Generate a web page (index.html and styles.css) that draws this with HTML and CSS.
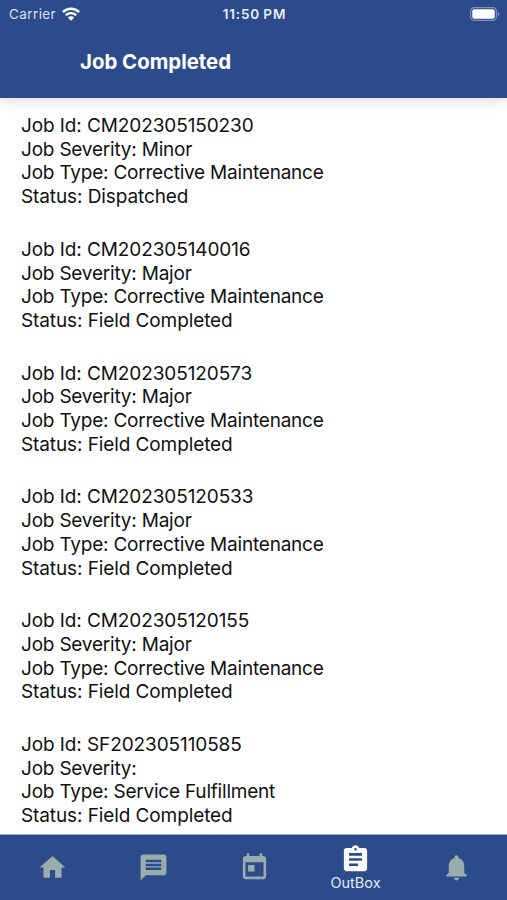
FILE: index.html
```html
<!DOCTYPE html>
<html lang="en">
<head>
    <meta charset="UTF-8">
    <meta name="viewport" content="width=device-width, initial-scale=1.0">
    <title>Job Completed</title>
    <link rel="stylesheet" href="styles.css">
</head>
<body>
    <header class="header">
        <div class="status-bar">
            <div class="carrier">
                <span class="carrier-name">Carrier</span>
                <svg class="wifi" viewBox="0 0 18 14" fill="none" stroke="#fff" stroke-width="2.3">
                    <path d="M.9 5.1a11.5 11.5 0 0 1 16.2 0"/>
                    <path d="M3.8 8.2a7.4 7.4 0 0 1 10.4 0"/>
                    <path d="M9 13.7 5.9 10.6a4.4 4.4 0 0 1 6.2 0z" fill="#fff" stroke="none"/>
                </svg>
            </div>
            <span class="time">11:50 PM</span>
            <div class="power">
                <svg class="battery" viewBox="0 0 30 14">
                    <rect x=".6" y=".6" width="25.8" height="12.8" rx="3.6" fill="none" stroke="#7f93ba" stroke-width="1.2"/>
                    <rect x="2.3" y="2.3" width="22.4" height="9.4" rx="2" fill="#fff"/>
                    <path d="M27.8 4.8c2.2.8 2.2 3.6 0 4.4z" fill="#7f93ba"/>
                </svg>
            </div>
        </div>
        <h1 class="title">Job Completed</h1>
    </header>

    <main class="job-list">
        <div class="job">
            <p class="job-id">Job Id: CM202305150230</p>
            <p>Job Severity: Minor</p>
            <p>Job Type: Corrective Maintenance</p>
            <p class="job-status">Status: Dispatched</p>
        </div>
        <div class="job">
            <p class="job-id">Job Id: CM202305140016</p>
            <p>Job Severity: Major</p>
            <p>Job Type: Corrective Maintenance</p>
            <p class="job-status">Status: Field Completed</p>
        </div>
        <div class="job">
            <p class="job-id">Job Id: CM202305120573</p>
            <p>Job Severity: Major</p>
            <p>Job Type: Corrective Maintenance</p>
            <p class="job-status">Status: Field Completed</p>
        </div>
        <div class="job">
            <p class="job-id">Job Id: CM202305120533</p>
            <p>Job Severity: Major</p>
            <p>Job Type: Corrective Maintenance</p>
            <p class="job-status">Status: Field Completed</p>
        </div>
        <div class="job">
            <p class="job-id">Job Id: CM202305120155</p>
            <p>Job Severity: Major</p>
            <p>Job Type: Corrective Maintenance</p>
            <p class="job-status">Status: Field Completed</p>
        </div>
        <div class="job">
            <p class="job-id">Job Id: SF202305110585</p>
            <p>Job Severity:</p>
            <p>Job Type: Service Fulfillment</p>
            <p class="job-status">Status: Field Completed</p>
        </div>
    </main>

    <nav class="tab-bar">
        <a class="tab">
            <svg viewBox="0 0 24 24"><path d="M10 20v-6h4v6h5v-8h3L12 3 2 12h3v8z"/></svg>
        </a>
        <a class="tab">
            <svg viewBox="0 0 24 24"><path d="M20 2H4c-1.1 0-1.99.9-1.99 2L2 22l4-4h14c1.1 0 2-.9 2-2V4c0-1.1-.9-2-2-2zm-2 12H6v-2h12v2zm0-3H6V9h12v2zm0-3H6V6h12v2z"/></svg>
        </a>
        <a class="tab">
            <svg viewBox="0 0 24 24"><path d="M19 3h-1V1h-2v2H8V1H6v2H5c-1.11 0-1.99.9-1.99 2L3 19c0 1.1.89 2 2 2h14c1.1 0 2-.9 2-2V5c0-1.1-.9-2-2-2zm0 16H5V8h14v11zM7 10h5v5H7z"/></svg>
        </a>
        <a class="tab active">
            <svg viewBox="0 0 24 24"><path d="M19 3h-4.18C14.4 1.84 13.3 1 12 1s-2.4.84-2.82 2H5c-1.1 0-2 .9-2 2v14c0 1.1.9 2 2 2h14c1.1 0 2-.9 2-2V5c0-1.1-.9-2-2-2zm-7 0c.55 0 1 .45 1 1s-.45 1-1 1-1-.45-1-1 .45-1 1-1zm2 14H7v-2h7v2zm3-4H7v-2h10v2zm0-4H7V7h10v2z"/></svg>
            <span>OutBox</span>
        </a>
        <a class="tab">
            <svg viewBox="0 0 24 24"><path d="M12 22c1.1 0 2-.9 2-2h-4c0 1.1.89 2 2 2zm6-6v-5c0-3.07-1.64-5.64-4.5-6.32V4c0-.83-.67-1.5-1.5-1.5s-1.5.67-1.5 1.5v.68C7.63 5.36 6 7.92 6 11v5l-2 2v1h16v-1l-2-2z"/></svg>
        </a>
    </nav>
</body>
</html>
```

FILE: styles.css
```css
* {
    box-sizing: border-box;
}
body {
    font-family: Inter, "Liberation Sans", sans-serif;
    background-color: #fff;
    margin: 0;
    height: 900px;
    display: flex;
    flex-direction: column;
    overflow: hidden;
}
.header {
    height: 98px;
    flex-shrink: 0;
    background-color: #2b4b8b;
    color: #fff;
    box-shadow: 0 1px 14px rgba(0, 0, 0, 0.18);
}
.status-bar {
    display: grid;
    grid-template-columns: 1fr auto 1fr;
    align-items: center;
    height: 27px;
    padding: 0 7px 0 9px;
}
.carrier {
    display: flex;
    align-items: center;
    gap: 6px;
}
.carrier-name {
    font-size: 13.5px;
    letter-spacing: 0.4px;
    color: #d9e0ee;
}
.wifi {
    width: 18px;
    height: 14px;
}
.time {
    font-size: 13.5px;
    font-weight: 600;
    letter-spacing: 0.85px;
    word-spacing: -1px;
    color: #e9eef7;
}
.power {
    display: flex;
    justify-content: flex-end;
}
.battery {
    width: 30px;
    height: 14px;
}
.title {
    margin: 0;
    padding-left: 80px;
    font-size: 20.4px;
    font-weight: 700;
    line-height: 70px;
}
.job-list {
    flex: 1;
    min-height: 0;
    overflow: hidden;
    padding: 16px 21px 0;
    display: flex;
    flex-direction: column;
    gap: 29px;
}
.job p {
    margin: 0;
    font-size: 19px;
    line-height: 23.7px;
    letter-spacing: -0.21px;
    color: #111;
}
.job .job-id {
    letter-spacing: -0.1px;
}
.job .job-status {
    letter-spacing: -0.1px;
}
.tab-bar {
    height: 66px;
    flex-shrink: 0;
    display: grid;
    grid-template-columns: repeat(5, 1fr);
    background-color: #2b4b8b;
    border-top: 1px solid #a3aec6;
    padding-left: 2px;
}
.tab {
    display: flex;
    flex-direction: column;
    align-items: center;
    justify-content: center;
    color: #9aacac;
}
.tab svg {
    width: 31px;
    height: 31px;
    fill: currentColor;
}
.tab.active {
    color: #fff;
}
.tab span {
    font-size: 14.5px;
    line-height: 16px;
    color: #e4eaf5;
}
```
